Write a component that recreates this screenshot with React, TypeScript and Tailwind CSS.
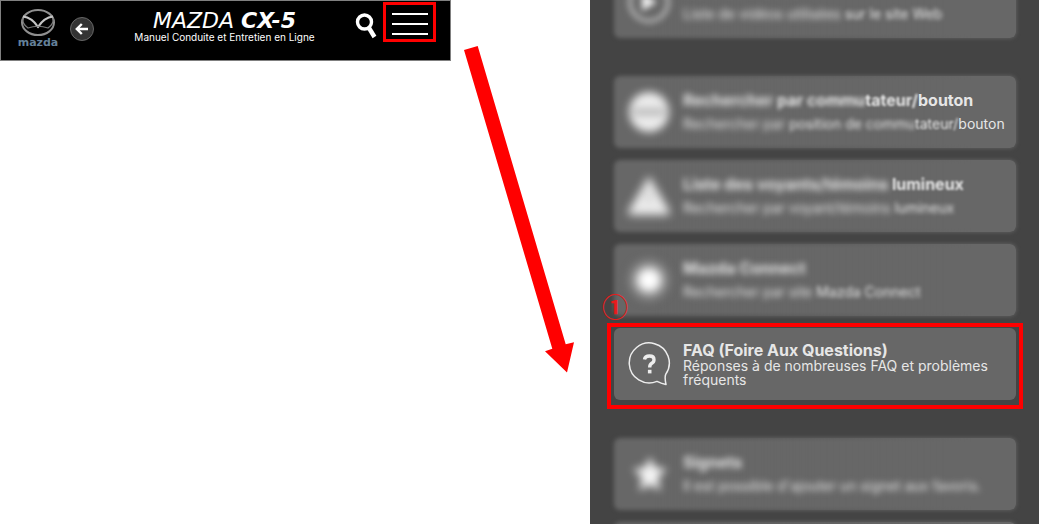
import React from 'react';

type Blur = 'none' | 'soft' | 'medium' | 'strong';
type Piece = [text: string, blur: Blur];

interface MenuItem {
  id: string;
  icon: React.ReactNode;
  title: Piece[];
  text: Piece[];
  spaced?: boolean;
  highlighted?: boolean;
}

const blurClass: Record<Blur, string> = {
  none: '',
  soft: 'blur-[1px]',
  medium: 'blur-[2px]',
  strong: 'blur-[3px]',
};

const PlayIcon = () => (
  <svg viewBox="0 0 44 44" className="size-11 blur-[3px]" aria-hidden="true">
    <circle cx="22" cy="22" r="19" fill="none" stroke="#b4b4b4" strokeWidth="4" />
    <path d="M15 13 L30 22 L15 31 Z" fill="#f0f0f0" />
  </svg>
);

const SwitchIcon = () => (
  <svg viewBox="0 0 44 44" className="size-11 blur-[4px]" aria-hidden="true">
    <circle cx="22" cy="22" r="20" fill="#ececec" />
    <rect x="6" y="19" width="32" height="6" fill="#b0b0b0" />
  </svg>
);

const WarningIcon = () => (
  <svg viewBox="0 0 44 44" className="size-11 blur-[5px]" aria-hidden="true">
    <path d="M22 2 L43 38 Q43 41 40 41 L4 41 Q1 41 1 38 Z" fill="#ececec" />
    <path d="M22 16 V29" stroke="#bbb" strokeWidth="3" />
  </svg>
);

const ConnectIcon = () => (
  <svg viewBox="0 0 44 44" className="size-11 blur-[5px]" aria-hidden="true">
    <circle cx="22" cy="22" r="20" fill="#8c8c8c" />
    <circle cx="22" cy="22" r="12" fill="#fff" />
  </svg>
);

const FaqIcon = () => (
  <svg viewBox="0 0 44 46" className="h-[46px] w-11" fill="none" stroke="#ededed" aria-hidden="true">
    <path
      d="M30 40.4 A20 20 0 1 1 38.8 33.2 Q37.4 36 39 43.5 Q35 42.8 30 40.4 Z"
      strokeWidth="1.5"
      strokeLinejoin="round"
    />
    <path d="M17.5 18.5 Q18 15 22.5 15 Q27 15 27 18.7 Q27 21 24.8 22.3 Q22.7 23.6 22.7 26.5" strokeWidth="3.4" />
    <path d="M22.7 28.8 V32.4" strokeWidth="3.6" />
  </svg>
);

const StarIcon = () => (
  <svg viewBox="0 0 44 44" className="size-11 blur-[4px]" aria-hidden="true">
    <path
      d="M23 5 L28 15.5 L40 17 L31 25.5 L33.5 39 L23 32.5 L12.5 39 L15 25.5 L6 17 L18 15.5 Z"
      fill="#f4f4f4"
    />
  </svg>
);

const items: MenuItem[] = [
  {
    id: 'videos',
    icon: <PlayIcon />,
    title: [['Liste de vidéos', 'medium']],
    text: [
      ['Liste de vidéos utilisées', 'strong'],
      ['sur le site Web', 'medium'],
    ],
  },
  {
    id: 'commutateur',
    icon: <SwitchIcon />,
    title: [
      ['Rechercher', 'strong'],
      ['par commu', 'medium'],
      ['tateur/', 'soft'],
      ['bouton', 'none'],
    ],
    text: [
      ['Rechercher par', 'strong'],
      ['position de commu', 'medium'],
      ['tateur/', 'soft'],
      ['bouton', 'none'],
    ],
    spaced: true,
  },
  {
    id: 'voyants',
    icon: <WarningIcon />,
    title: [
      ['Liste des voyants/témoins', 'strong'],
      ['lumineux', 'soft'],
    ],
    text: [
      ['Rechercher par voyant/témoins', 'strong'],
      ['lumineux', 'medium'],
    ],
  },
  {
    id: 'connect',
    icon: <ConnectIcon />,
    title: [['Mazda Connect', 'strong']],
    text: [
      ['Rechercher par site', 'strong'],
      ['Mazda Connect', 'medium'],
    ],
  },
  {
    id: 'faq',
    icon: <FaqIcon />,
    title: [['FAQ (Foire Aux Questions)', 'none']],
    text: [['Réponses à de nombreuses FAQ et problèmes fréquents', 'none']],
    highlighted: true,
  },
  {
    id: 'signets',
    icon: <StarIcon />,
    title: [['Signets', 'strong']],
    text: [["Il est possible d'ajouter un signet aux favoris.", 'strong']],
    spaced: true,
  },
  { id: 'suivant', icon: null, title: [], text: [] },
];

// Pas d'espace quand un mot est partagé entre deux niveaux de flou
const isJoined = (previous: string) => previous.endsWith('/') || previous.endsWith('commu');

const Pieces = ({ pieces }: { pieces: Piece[] }) => (
  <>
    {pieces.map(([text, blur], i) => (
      <React.Fragment key={text}>
        {i > 0 && !isJoined(pieces[i - 1][0]) && ' '}
        <span className={blur === 'none' ? '' : `inline-block ${blurClass[blur]}`}>{text}</span>
      </React.Fragment>
    ))}
  </>
);

const MenuCard = ({ item }: { item: MenuItem }) => (
  <a href={`#${item.id}`} className="relative isolate flex h-[72px] items-center gap-3 pr-6 pl-[13px] text-[#e6e6e6]">
    {item.highlighted ? (
      <span className="absolute inset-0 -z-10 rounded-md bg-[#676767]" />
    ) : (
      <>
        <span className="absolute inset-0 -z-10 rounded-md bg-[#676767] blur-[2px]" />
        <span className="absolute inset-0 -z-10 rounded-md bg-[#676767] [mask-image:linear-gradient(to_right,transparent_10%,black_90%)]" />
      </>
    )}
    <span className="w-11 shrink-0">{item.icon}</span>
    <span className="min-w-0 flex-1">
      <span className={`block text-base font-bold ${item.highlighted ? 'leading-[18px]' : 'leading-6'}`}>
        <Pieces pieces={item.title} />
      </span>
      <span className={`block text-sm ${item.highlighted ? 'leading-[14px]' : 'leading-6 whitespace-nowrap'}`}>
        <Pieces pieces={item.text} />
      </span>
    </span>
    {item.highlighted && (
      <>
        <span className="absolute -inset-x-[7px] -top-[5px] -bottom-[9px] border-4 border-[#ff0000]" />
        <span className="absolute -top-9 -left-3 font-['Noto_Sans_CJK_JP',sans-serif] text-[26px] leading-7 font-bold text-[#e81c1c]">
          ①
        </span>
      </>
    )}
  </a>
);

const Header = () => (
  <header className="flex h-[61px] items-start border border-[#808080] bg-black pr-3.5 pl-4 text-white">
    <a href="#accueil" aria-label="Mazda" className="mt-2 w-[42px]">
      <svg viewBox="0 0 42 39" className="w-full" fill="none">
        <ellipse cx="21" cy="13.5" rx="16" ry="12.5" stroke="#8f8f8f" strokeWidth="2" />
        <path
          d="M6 7.5 Q15 8.5 21 18 Q27 8.5 36 7.5"
          stroke="#c4c4c4"
          strokeWidth="2.2"
          strokeLinejoin="round"
        />
        <path d="M6 9 Q5 15 11 19 Q21 15.5 31 19 Q37 15 36 9" stroke="#777" strokeWidth="1.2" />
        <text x="21" y="37" textAnchor="middle" fontSize="11" fontWeight="700" fill="#64809a" fontFamily="DejaVu Sans, sans-serif">
          mazda
        </text>
      </svg>
    </a>
    <button
      type="button"
      aria-label="Retour"
      className="mt-4 ml-[11px] flex size-6 items-center justify-center rounded-full border border-[#666] bg-[#333]"
    >
      <svg viewBox="0 0 14 14" className="size-3.5" fill="none" stroke="white" strokeWidth="2.4">
        <path d="M13 7 H2 M6.8 2 L1.8 7 L6.8 12" />
      </svg>
    </button>
    <div className="mt-2 min-w-0 flex-1 text-center whitespace-nowrap">
      <h1 className="font-['DejaVu_Sans',sans-serif] text-[22px] leading-6 italic">
        MAZDA <b>CX-5</b>
      </h1>
      <p className="text-[10px] leading-2">Manuel Conduite et Entretien en Ligne</p>
    </div>
    <button type="button" aria-label="Rechercher" className="mt-3 mr-1.5">
      <svg viewBox="0 0 22 26" className="h-[26px] w-[22px]" fill="none" stroke="white">
        <circle cx="9.5" cy="9" r="7" strokeWidth="3.4" />
        <path d="M14 15 L19.5 24" strokeWidth="4.4" />
      </svg>
    </button>
    <button type="button" aria-label="Menu" className="mt-px flex h-10 w-[53px] flex-col items-center gap-2 border-[3px] border-[#ff0000] pt-2">
      <span className="h-0.5 w-9 bg-white" />
      <span className="h-0.5 w-9 bg-white" />
      <span className="h-0.5 w-9 bg-white" />
    </button>
  </header>
);

const App: React.FC = () => {
  return (
    <div className="grid h-screen grid-cols-[451fr_139fr_449fr] overflow-hidden bg-white font-['Inter',sans-serif]">
      <Header />

      {/* Flèche du bouton de menu vers la FAQ */}
      <svg viewBox="0 0 139 380" className="w-full" aria-hidden="true">
        <path d="M13 50 L26.7 46 L114.7 344.3 L123 342.3 L116 372.5 L94 351.3 L101.3 348.7 Z" fill="#ff0000" />
      </svg>

      <nav className="overflow-hidden bg-[#444] pr-[23px] pl-6">
        {/* La liste est défilée : la première carte est coupée en haut */}
        <ul className="-mt-[34px] flex flex-col gap-3">
          {items.map((item) => (
            <li key={item.id} className={item.spaced ? 'pt-[26px]' : ''}>
              <MenuCard item={item} />
            </li>
          ))}
        </ul>
      </nav>
    </div>
  );
};

export default App;
